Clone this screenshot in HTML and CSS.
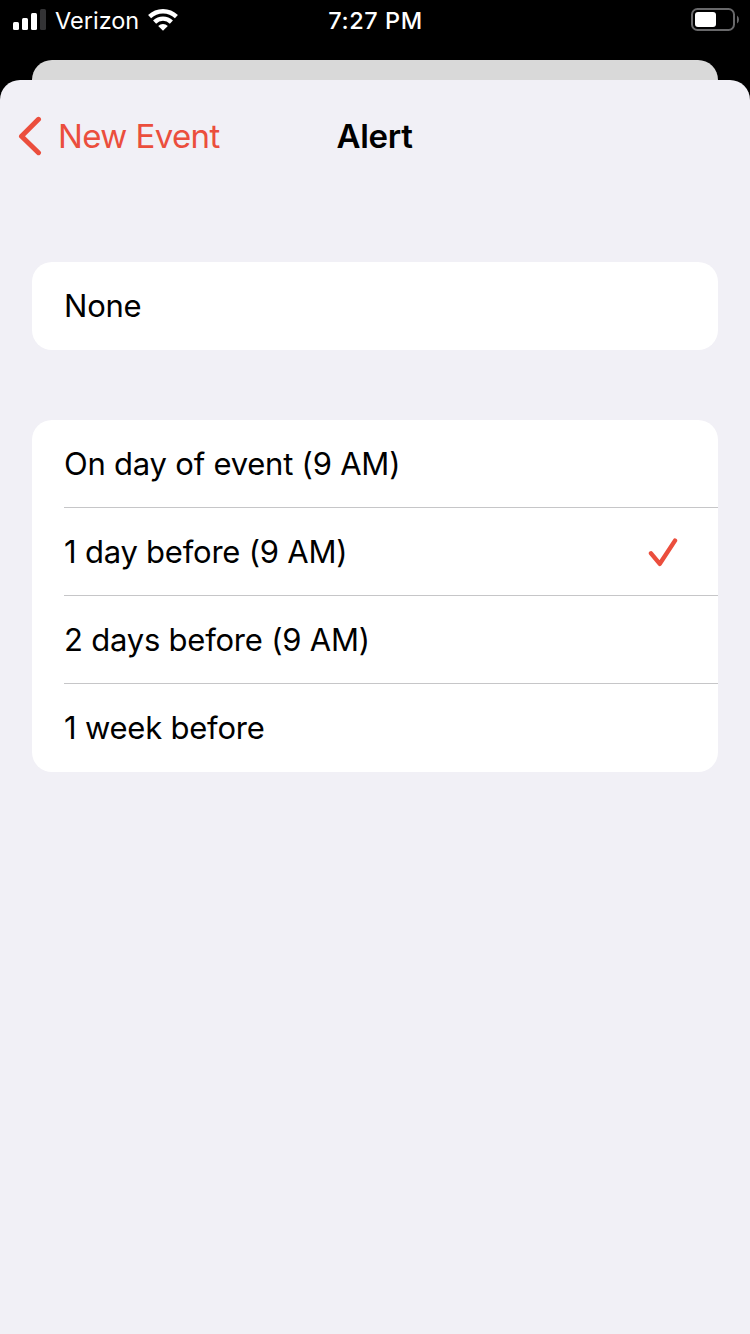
FILE: index.html
```html
<!DOCTYPE html>
<html lang="en">
<head>
<meta charset="utf-8">
<title>Alert</title>
<link rel="stylesheet" href="styles.css">
</head>
<body>
<div class="screen">
  <header class="status">
    <div class="status-left">
      <svg class="signal" width="33" height="21" viewBox="0 0 33 21"><g fill="#fff"><rect x="0" y="13" width="6" height="8" rx="1.5"/><rect x="9" y="9" width="6" height="12" rx="1.5"/><rect x="18" y="4" width="6" height="17" rx="1.5"/></g><rect x="27" y="0" width="6" height="21" rx="1.5" fill="#333335"/></svg>
      <span class="carrier">Verizon</span>
      <svg class="wifi" width="30" height="23" viewBox="0 0 30 23"><g fill="none" stroke="#fff" stroke-width="4.4"><path d="M1.6 7.7A19.3 19.3 0 0 1 28.4 7.7"/><path d="M6.6 13.1A12 12 0 0 1 23.4 13.1"/></g><path d="M10.2 17A7 7 0 0 1 19.8 17L15 21.8Z" fill="#fff"/></svg>
    </div>
    <span class="clock">7:27 PM</span>
    <svg class="battery" width="48" height="23" viewBox="0 0 48 23"><rect x="1" y="1" width="42" height="21" rx="5.5" fill="none" stroke="#68686a" stroke-width="2"/><rect x="4" y="4" width="21" height="15" rx="3" fill="#fff"/><path d="M46 7.5Q48 9 48 11.5T46 15.5Z" fill="#68686a"/></svg>
  </header>
  <div class="back-card"></div>
  <main class="sheet">
    <nav class="nav">
      <a class="back">
        <svg class="chevron" width="24" height="40" viewBox="0 0 24 40"><path d="M20.5 3.3L3.5 20.3L20.5 36.7" fill="none" stroke="#eb4e3d" stroke-width="5" stroke-linecap="round" stroke-linejoin="round"/></svg>
        <span class="back-label">New Event</span>
      </a>
      <h1 class="title">Alert</h1>
    </nav>
    <ul class="group">
      <li class="row"><span class="label">None</span></li>
    </ul>
    <ul class="group">
      <li class="row"><span class="label">On day of event (9 AM)</span></li>
      <li class="row"><span class="label">1 day before (9 AM)</span>
        <svg class="check" width="30" height="30" viewBox="0 0 30 30"><path d="M3 16.3L11.8 26.8L27 3.6" fill="none" stroke="#eb4e3d" stroke-width="4.4" stroke-linecap="round" stroke-linejoin="round"/></svg></li>
      <li class="row"><span class="label">2 days before (9 AM)</span></li>
      <li class="row"><span class="label">1 week before</span></li>
    </ul>
  </main>
</div>
</body>
</html>
```

FILE: styles.css
```css
* { box-sizing: border-box; }
body { margin: 0; background: #000; font-family: Inter, "Liberation Sans", sans-serif; color: #000; }
.screen { width: 750px; height: 1334px; display: flex; flex-direction: column; overflow: hidden; }
.status { height: 60px; padding: 0 11px 18px 13px; display: grid; grid-template-columns: 1fr auto 1fr; align-items: center; color: #fff; }
.status-left { display: flex; align-items: center; }
.signal { margin-top: -3px; }
.carrier { margin-left: 9px; font-size: 23.5px; line-height: 42px; letter-spacing: 0; }
.wifi { margin: -2px 0 0 9px; }
.clock { margin-right: 1px; font-size: 23.5px; font-weight: 500; line-height: 42px; letter-spacing: 0.6px; }
.battery { justify-self: end; margin-top: -3px; }
.back-card { height: 20px; flex: none; margin: 0 32px; border-radius: 20px 20px 0 0; background: #d9d9d9; }
.sheet { flex: 1; border-radius: 20px 20px 0 0; background: #f1f0f6; }
.nav { height: 112px; margin-bottom: 70px; padding: 0 18px; display: grid; grid-template-columns: 1fr auto 1fr; align-items: center; }
.back { display: flex; align-items: center; color: #eb4e3d; }
.back-label { margin-left: 16px; font-size: 33px; letter-spacing: -0.6px; }
.title { margin: 0 1px 0 0; font-size: 33px; font-weight: 600; letter-spacing: -0.3px; }
.group { list-style: none; margin: 0 32px 70px; padding: 0 0 0 32px; border-radius: 20px; background: #fff; }
.row { height: 88px; padding-right: 40px; display: flex; align-items: center; justify-content: space-between; }
.row:not(:last-child) { box-shadow: inset 0 -1px #c6c6c8; }
.label { padding-bottom: 2px; font-size: 31px; letter-spacing: -0.22px; }
```
